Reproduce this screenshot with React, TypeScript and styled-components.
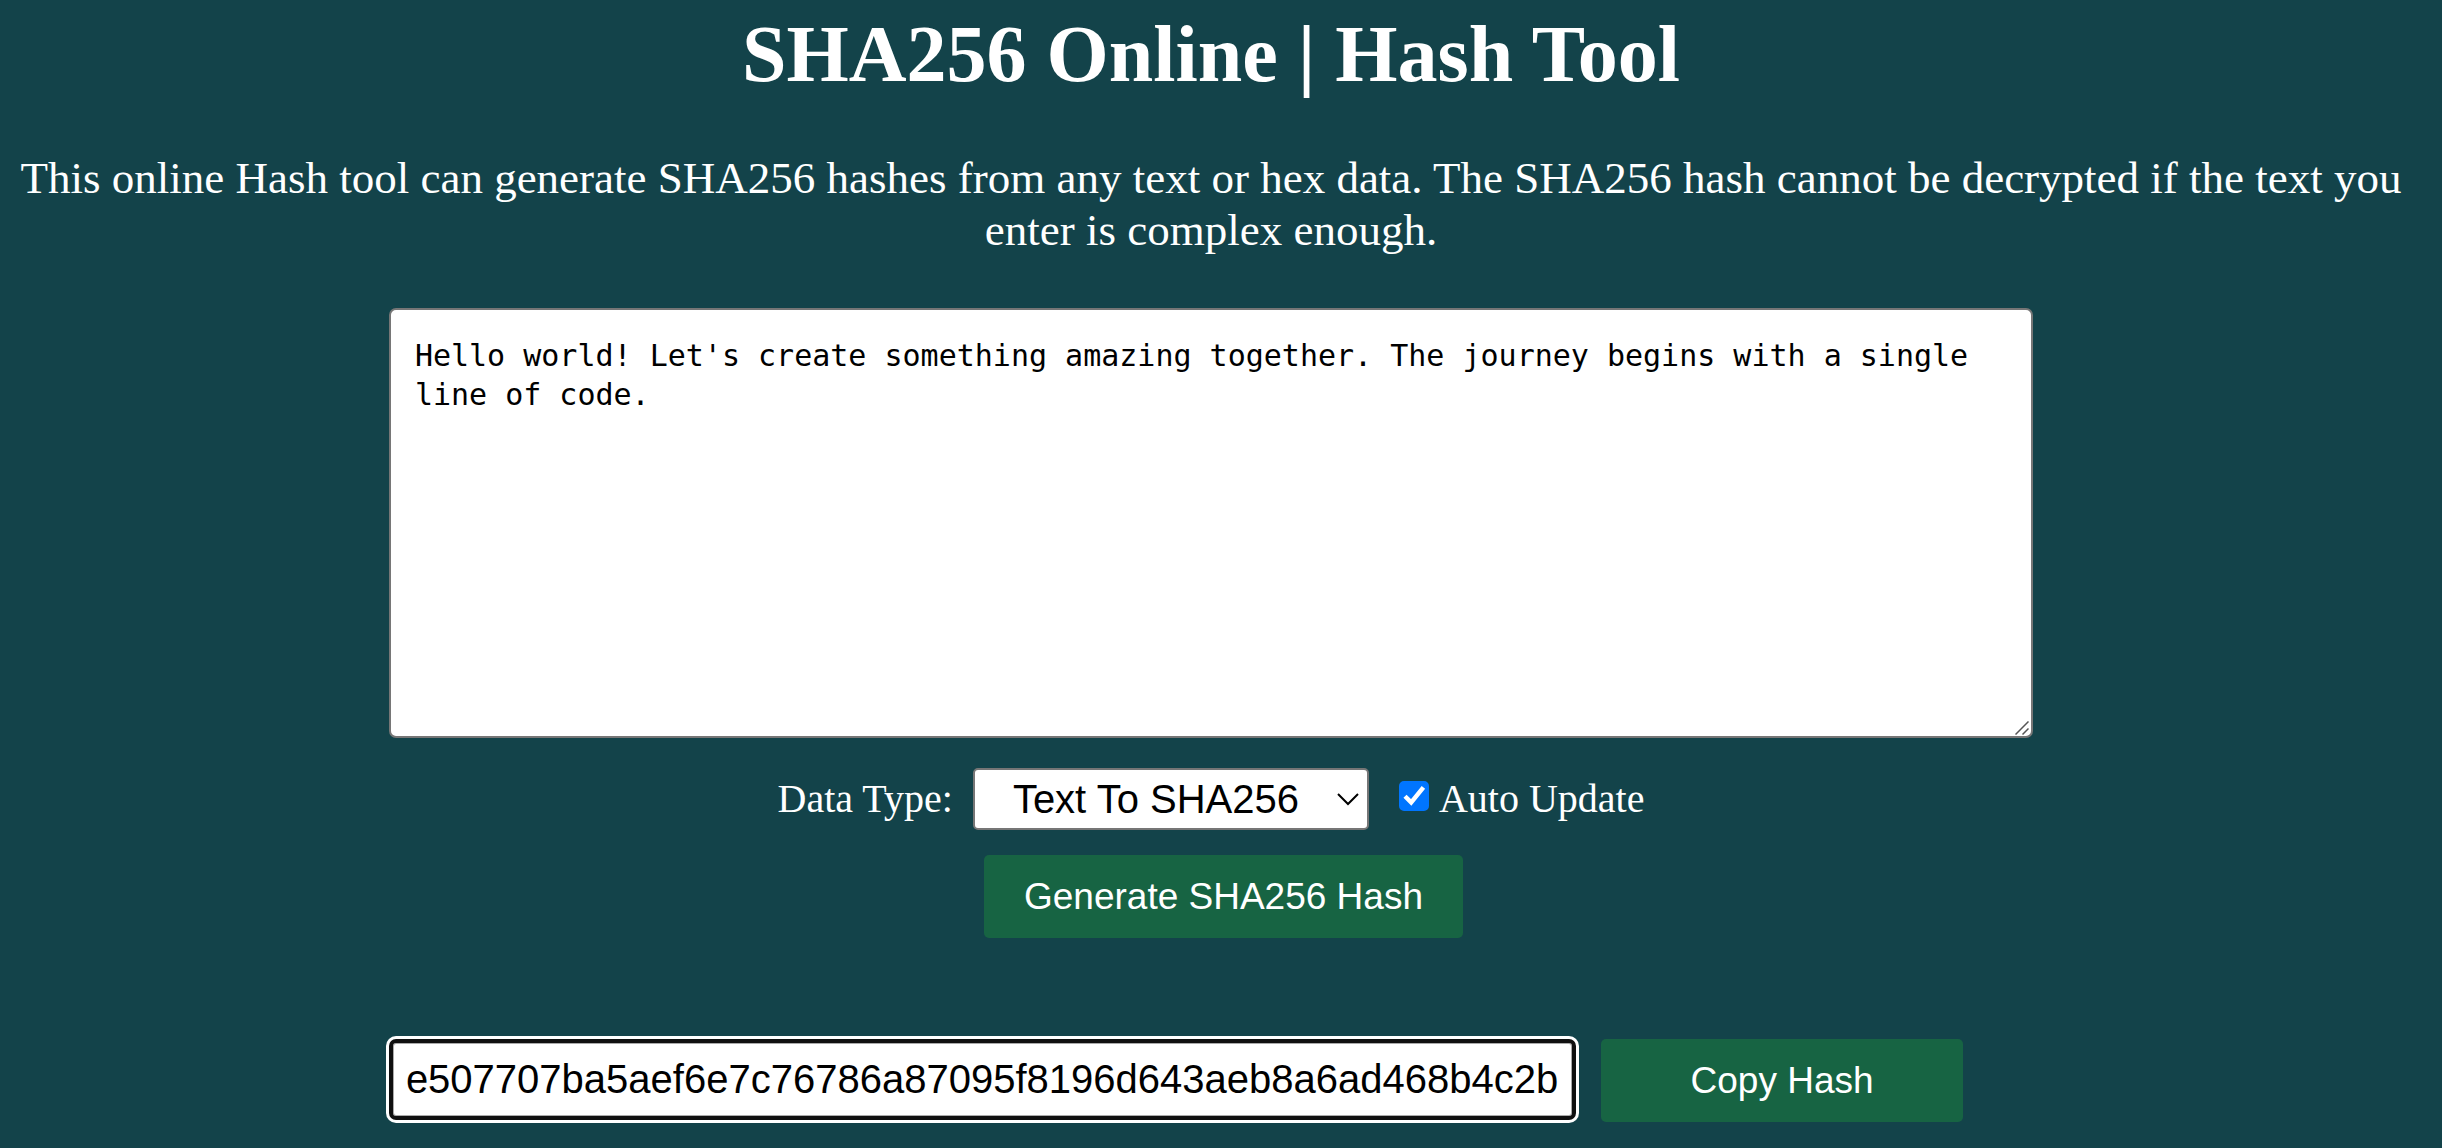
import { useState } from 'react';
import styled, { createGlobalStyle } from 'styled-components';

const GlobalStyle = createGlobalStyle`
  body {
    margin: 0;
    background: #13434a;
    color: #fff;
    font-family: "Liberation Serif", "Times New Roman", serif;
  }
  *, *::before, *::after { box-sizing: border-box; }
`;

const Page = styled.main`
  display: flex;
  flex-direction: column;
  align-items: center;
  padding: 8px 22px 24px 2px;
`;

const Title = styled.h1`
  margin: 0;
  font-size: 80px;
  line-height: 92px;
  text-align: center;
`;

const Intro = styled.p`
  margin: 52px 8px;
  font-size: 45px;
  line-height: 52px;
  text-align: center;
`;

const Form = styled.form`
  display: flex;
  flex-direction: column;
  align-items: center;
  width: 68%;
`;

const Source = styled.textarea`
  display: block;
  width: 100%;
  height: 430px;
  padding: 26px 24px;
  border: 2px solid #767676;
  border-radius: 7px;
  background: #fff;
  color: #000;
  font-family: "DejaVu Sans Mono", monospace;
  font-size: 30px;
  line-height: 39px;
  resize: none;
  outline: none;
`;

const SourceBox = styled.div`
  position: relative;
  width: 100%;
`;

const Grip = styled.svg`
  position: absolute;
  right: 4px;
  bottom: 3px;
  width: 14px;
  height: 14px;
  pointer-events: none;
`;

const Options = styled.div`
  display: flex;
  align-items: center;
  margin: 30px 0 25px;
  font-size: 40px;
  line-height: 46px;
`;

const SelectBox = styled.div`
  position: relative;
  margin: 0 30px 0 20px;
`;

const Select = styled.select`
  display: block;
  width: 396px;
  height: 62px;
  padding: 0 38px;
  border: 2px solid #767676;
  border-radius: 5px;
  background: #fff;
  color: #000;
  font-family: "Liberation Sans", Arial, sans-serif;
  font-size: 40px;
  appearance: none;
`;

const Chevron = styled.svg`
  position: absolute;
  right: 10px;
  top: 24px;
  width: 22px;
  height: 14px;
  pointer-events: none;
`;

const CheckLabel = styled.label`
  display: flex;
  align-items: center;
  gap: 10px;
`;

const CheckBox = styled.span`
  position: relative;
  display: block;
  width: 30px;
  height: 30px;
  margin-bottom: 6px;
`;

const Check = styled.input`
  display: block;
  width: 30px;
  height: 30px;
  margin: 0;
  appearance: none;
  border: 2px solid #767676;
  border-radius: 5px;
  background: #fff;
  &:checked {
    border-color: #0075ff;
    background: #0075ff;
  }
`;

const Tick = styled.svg`
  position: absolute;
  inset: 0;
  width: 30px;
  height: 30px;
  pointer-events: none;
`;

const Button = styled.button`
  height: 83px;
  padding: 0 40px;
  border: 0;
  border-radius: 5px;
  background: #176443;
  color: #fff;
  font-family: "Liberation Sans", Arial, sans-serif;
  font-size: 37px;
  white-space: nowrap;
`;

const GenerateButton = styled(Button)`
  margin-left: 25px;
`;

const Result = styled.div`
  display: grid;
  grid-template-columns: 1fr 23%;
  align-items: start;
  gap: 25px;
  width: 100%;
  margin-top: 101px;
  padding-right: 70px;
`;

const Hash = styled.input`
  width: 100%;
  height: 81px;
  padding: 0 13px;
  border: 4px solid #101010;
  border-radius: 7px;
  box-shadow: 0 0 0 3px #fff, inset 0 0 0 1px #aaa;
  background: #fff;
  color: #000;
  font-family: "Liberation Sans", Arial, sans-serif;
  font-size: 40px;
  outline: none;
`;

export default function App() {
  const [text, setText] = useState(
    "Hello world! Let's create something amazing together. The journey begins with a single line of code."
  );
  const [auto, setAuto] = useState(true);

  return (
    <>
      <GlobalStyle />
      <Page>
        <Title>SHA256 Online | Hash Tool</Title>
        <Intro>
          This online Hash tool can generate SHA256 hashes from any text or hex data. The SHA256
          hash cannot be decrypted if the text you enter is complex enough.
        </Intro>
        <Form onSubmit={(e) => e.preventDefault()}>
          <SourceBox>
            <Source
              aria-label="Text to hash"
              spellCheck={false}
              value={text}
              onChange={(e) => setText(e.target.value)}
            />
            <Grip viewBox="0 0 14 14" fill="none" stroke="#555" strokeWidth="1.5" aria-hidden="true">
              <path d="M0.5 13.5L13.5 0.5M7.5 13.5L13.5 7.5" />
            </Grip>
          </SourceBox>
          <Options>
            <label htmlFor="data-type">Data Type:</label>
            <SelectBox>
              <Select id="data-type" defaultValue="text">
                <option value="text">Text To SHA256</option>
                <option value="hex">Hex To SHA256</option>
              </Select>
              <Chevron viewBox="0 0 22 14" fill="none" stroke="#000" strokeWidth="2" aria-hidden="true">
                <path d="M1 2L11 12L21 2" />
              </Chevron>
            </SelectBox>
            <CheckLabel>
              <CheckBox>
                <Check type="checkbox" checked={auto} onChange={(e) => setAuto(e.target.checked)} />
                {auto && (
                  <Tick viewBox="0 0 30 30" fill="none" stroke="#fff" strokeWidth="4.4" aria-hidden="true">
                    <path d="M6 15.2L12.2 21.4L24.4 6.4" />
                  </Tick>
                )}
              </CheckBox>
              Auto Update
            </CheckLabel>
          </Options>
          <GenerateButton type="submit">Generate SHA256 Hash</GenerateButton>
          <Result>
            <Hash
              aria-label="SHA256 hash"
              readOnly
              value="e507707ba5aef6e7c76786a87095f8196d643aeb8a6ad468b4c2b"
            />
            <Button type="button">Copy Hash</Button>
          </Result>
        </Form>
      </Page>
    </>
  );
}
